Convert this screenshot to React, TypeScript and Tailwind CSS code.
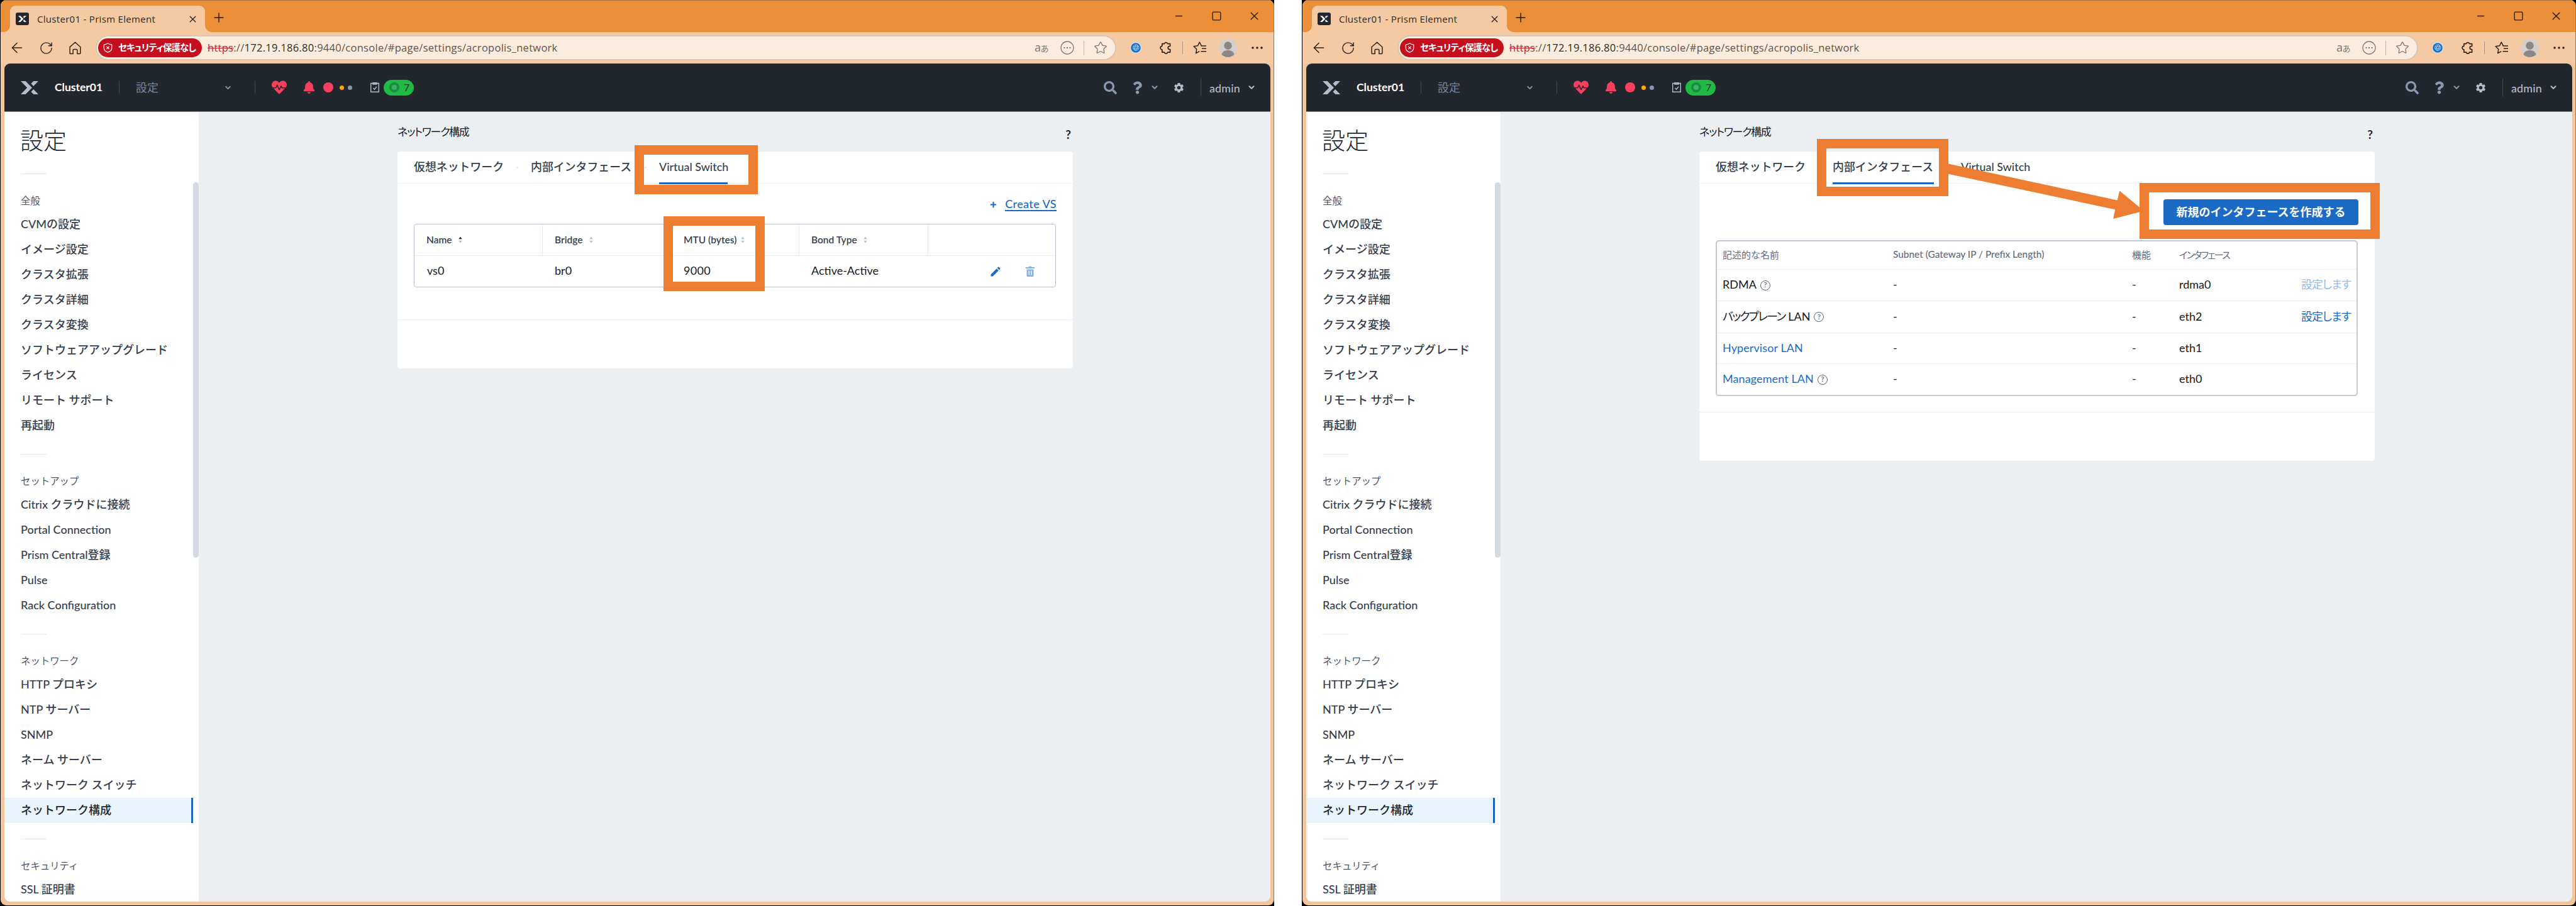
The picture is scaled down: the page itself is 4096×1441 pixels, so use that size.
import type { ReactNode } from "react";
import { RotateCw, ArrowLeft, X, Plus, Minus, Square, Star, ChevronDown } from "lucide-react";
import { FaHeartbeat, FaBell, FaSearch, FaQuestion, FaPlus } from "react-icons/fa";
import { MdSettings, MdEdit } from "react-icons/md";

const sections = [
  {
    title: "全般",
    items: [
      "CVMの設定",
      "イメージ設定",
      "クラスタ拡張",
      "クラスタ詳細",
      "クラスタ変換",
      "ソフトウェアアップグレード",
      "ライセンス",
      "リモート サポート",
      "再起動",
    ],
  },
  {
    title: "セットアップ",
    items: ["Citrix クラウドに接続", "Portal Connection", "Prism Central登録", "Pulse", "Rack Configuration"],
  },
  {
    title: "ネットワーク",
    items: ["HTTP プロキシ", "NTP サーバー", "SNMP", "ネーム サーバー", "ネットワーク スイッチ", "ネットワーク構成"],
  },
  { title: "セキュリティ", items: ["SSL 証明書"] },
];

const interfaces = [
  { name: "RDMA", help: true, link: false, iface: "rdma0", action: "disabled", height: "h-[50px]" },
  { name: "バックプレーン LAN", help: true, link: false, iface: "eth2", action: "enabled", height: "h-[51px]" },
  { name: "Hypervisor LAN", help: false, link: true, iface: "eth1", action: "", height: "h-[49px]" },
  { name: "Management LAN", help: true, link: true, iface: "eth0", action: "", height: "h-[50px]" },
];

function XLogo({ className }: { className?: string }) {
  return (
    <svg viewBox="0 0 28 21" className={className} fill="currentColor">
      <path d="M0 0H7.6L18 10.5L7.6 21H0L10.2 10.5Z" />
      <path d="M20.4 0H28L20.2 7.9L16.4 4.1Z" />
      <path d="M20.2 13.1L28 21H20.4L16.4 16.9Z" />
    </svg>
  );
}

function TitleBar() {
  return (
    <div className="flex h-[51px] shrink-0 items-start border-t border-[#a8703e] bg-[#eb9039]">
      <div className="relative mt-2 ml-[15px] flex h-[42px] w-[310px] items-center rounded-t-[9px] bg-[#f5caa2] pl-[9px]">
        <span className="absolute bottom-0 -left-[10px] size-[10px] bg-[radial-gradient(circle_at_0_0,transparent_9.5px,#f5caa2_10px)]" />
        <span className="absolute -right-[10px] bottom-0 size-[10px] bg-[radial-gradient(circle_at_100%_0,transparent_9.5px,#f5caa2_10px)]" />
        <span className="flex h-5 w-[21px] items-center justify-center rounded-[3px] bg-[#22272e] text-white">
          <XLogo className="h-2.5 w-[13px]" />
        </span>
        <span className="ml-[13px] w-[225px] text-[15px] leading-5 tracking-[0.3px] whitespace-nowrap text-[#2c2824]">Cluster01 - Prism Element</span>
        <X className="ml-[14px] size-[17px] text-[#1f1a16]" strokeWidth={1.8} />
      </div>
      <Plus className="mt-[15px] ml-[10px] size-6 text-[#1f1a16]" strokeWidth={1.4} />
      <div className="mt-[16px] mr-[22px] ml-auto flex gap-[43px] text-[#1f1a16]">
        <Minus className="size-[17px]" strokeWidth={1.8} />
        <Square className="size-[17px]" strokeWidth={1.8} />
        <X className="size-[17px] scale-125" strokeWidth={1.5} />
      </div>
    </div>
  );
}

function Toolbar() {
  return (
    <div className="flex h-[50px] shrink-0 items-center bg-[#f5caa2] text-[#2a211a]">
      <ArrowLeft className="ml-[13px] size-[26px]" strokeWidth={1.4} />
      <RotateCw className="ml-[22px] size-[23px]" strokeWidth={1.5} />
      <svg viewBox="0 0 20 20" className="ml-[24px] size-[21px]" fill="none" stroke="currentColor" strokeWidth="1.4" strokeLinejoin="round">
        <path d="M2 8.4L10 1.2L18 8.4V17.6A1 1 0 0 1 17 18.6H13.2V13A1.2 1.2 0 0 0 12 11.8H8A1.2 1.2 0 0 0 6.8 13V18.6H3A1 1 0 0 1 2 17.6Z" />
      </svg>
      <div className="ml-[22px] flex h-[40px] w-[1623px] items-center rounded-full border-2 border-[#dcc6b2] bg-[#fcecdd] pl-[2px] whitespace-nowrap">
        <div className="flex h-[30px] w-[165px] shrink-0 items-center rounded-full bg-[#c50f1f] pl-[8px] text-white">
          <svg viewBox="0 0 16 18" className="h-[16px] w-[15px] shrink-0" fill="none" stroke="currentColor" strokeWidth="1.4" strokeLinejoin="round">
            <path d="M8 1C9.8 2.6 12 3.2 15 3.4V9C15 12.8 12 15.8 8 17C4 15.8 1 12.8 1 9V3.4C4 3.2 6.2 2.6 8 1Z" />
            <path d="M5.6 6.6L10.4 11.4M10.4 6.6L5.6 11.4" />
          </svg>
          <span className="ml-[9px] text-[14.5px] leading-5 font-bold tracking-[-0.9px] [font-feature-settings:'palt']">セキュリティ保護なし</span>
        </div>
        <span className="ml-[9px] text-[16.5px] leading-5 tracking-[0.28px] text-[#5c544c]">
          <span className="text-[#c8202e] line-through decoration-1">https</span>
          ://<span className="text-[#2f2a26]">172.19.186.80</span>:9440/console/#page/settings/acropolis_network
        </span>
        <div className="ml-auto flex items-center text-[#7f756c]">
          <span className="w-[24px] text-[18px] leading-5 tracking-[-0.5px]">
            a<span className="text-[13px]">あ</span>
          </span>
          <svg viewBox="0 0 22 22" className="ml-[17px] size-[22px]" fill="none" stroke="currentColor" strokeWidth="1.3">
            <circle cx="11" cy="11" r="10" />
            <path d="M5.5 11h2M10 11h2M14.5 11h2" strokeWidth="2" />
          </svg>
          <span className="ml-[15px] h-[23px] w-px bg-[#c8b8a8]" />
          <Star className="mr-[12px] ml-[15px] size-[22px]" strokeWidth={1.4} />
        </div>
      </div>
      <svg viewBox="0 0 18 18" className="ml-[22px] size-[18px]">
        <circle cx="9" cy="9" r="9" fill="#dbe8f2" />
        <circle cx="9" cy="9" r="7.8" fill="#1a6fc4" />
        <g fill="none" stroke="#a9d0f2" strokeWidth="0.9">
          <circle cx="9.3" cy="8.7" r="4.6" />
          <ellipse cx="9.3" cy="8.7" rx="2" ry="4.6" transform="rotate(20 9.3 8.7)" />
          <path d="M5 7.2L13.2 7.6M5 10.2L13 10.6" />
        </g>
      </svg>
      <svg viewBox="0 0 20 20" className="ml-[28px] size-[22px]" fill="none" stroke="currentColor" strokeWidth="1.5" strokeLinejoin="round">
        <path d="M5 4.2H7.6A2.5 2.5 0 0 1 12.4 4.2H16V7.7H15.2A2.3 2.3 0 0 0 15.2 12.3H16V16.5H12.4A2.5 2.5 0 0 1 7.6 16.5H4.4V12.6A2.5 2.5 0 0 1 4.4 7.6V4.2Z" />
      </svg>
      <span className="ml-[15px] h-5 w-px bg-[#ad9078]" />
      <svg viewBox="0 0 22 20" className="ml-[16px] h-[20px] w-[22px]" fill="none" stroke="currentColor" strokeWidth="1.5" strokeLinejoin="round">
        <path d="M13.4 6.8L10.3 1L7.5 6.8L1.2 7.8L5.7 12.3L4.7 18.7L10.3 15.7" />
        <path d="M12.5 6.9H21M14 11.3H21M12.5 15.7H21" />
      </svg>
      <svg viewBox="0 0 30 30" className="ml-[19px] size-[29px]">
        <circle cx="15" cy="15" r="15" fill="#d3cfcb" />
        <circle cx="15" cy="11" r="6.5" fill="#8b8784" />
        <path d="M4.5 25.5C6 20.5 10 18.5 15 18.5S24 20.5 25.5 25.5A15 15 0 0 1 4.5 25.5Z" fill="#8b8784" />
      </svg>
      <svg viewBox="0 0 18 4" className="ml-[23px] h-1 w-[18px]" fill="currentColor">
        <circle cx="2" cy="2" r="1.8" />
        <circle cx="9" cy="2" r="1.8" />
        <circle cx="16" cy="2" r="1.8" />
      </svg>
    </div>
  );
}

function Header() {
  return (
    <div className="flex h-[77px] shrink-0 items-center border-b border-[#7e858e] bg-[#22272e] text-[#b6bccb]">
      <XLogo className="ml-[26px] h-[21px] w-[28px]" />
      <span className="ml-[26px] w-[77px] text-[17.5px] leading-6 font-bold text-white">Cluster01</span>
      <span className="ml-[25px] h-[20px] w-px bg-[#414852]" />
      <span className="ml-[26px] w-[141px] text-[18px] leading-6 text-[#77849a]">設定</span>
      <ChevronDown className="-ml-[1px] size-[13px] text-[#8a96a8]" strokeWidth={3.5} />
      <span className="ml-[36px] h-[20px] w-px bg-[#414852]" />
      <FaHeartbeat className="ml-[26px] size-[24px] text-[#fa3f5e]" />
      <FaBell className="ml-[25px] h-[20px] w-[21px] text-[#fa3f5e]" />
      <span className="ml-[12px] size-[16px] rounded-full bg-[#fa3f5e]" />
      <span className="ml-[10px] size-[7px] rounded-full bg-[#ffa90a]" />
      <span className="ml-[6px] size-[7px] rounded-full bg-[#8b98aa]" />
      <svg viewBox="0 0 14 16" className="ml-[29px] h-[16px] w-[14px]" fill="none" stroke="currentColor" strokeWidth="1.4">
        <path d="M0.7 1.5H13.3V15.3H0.7Z" />
        <path d="M4 0.5H10V3H4ZM4.5 9L6.5 11.2L10 6.8" />
      </svg>
      <span className="ml-[7px] flex h-[25px] w-[48px] items-center rounded-full bg-[#20bb45] pl-[9px] text-[#22272e]">
        <span className="size-[16px] rounded-full border-[4px] border-[#178f3d] bg-[#3fb268]" />
        <span className="ml-[7px] text-[16px] leading-5">7</span>
      </span>
      <div className="ml-auto flex items-center text-[#8b98ad]">
        <FaSearch className="size-[21px]" />
        <FaQuestion className="ml-[25px] h-[21px] w-[15px]" />
        <ChevronDown className="ml-[13px] size-[14px]" strokeWidth={3.5} />
        <MdSettings className="ml-[22px] size-[19px] text-[#b6bccb]" />
        <span className="ml-[25px] h-[28px] w-px bg-[#414852]" />
        <span className="mt-[2px] ml-[13px] w-[49px] text-[17.8px] leading-6 font-medium tracking-[0.2px] text-[#b6bccb]">admin</span>
        <ChevronDown className="mr-[23px] ml-[11px] size-[14px] text-[#b6bccb]" strokeWidth={3.5} />
      </div>
    </div>
  );
}

function Sidebar() {
  return (
    <aside className="relative w-[309px] shrink-0 overflow-hidden bg-white">
      <h1 className="mt-[18px] mb-[25px] ml-[25px] h-[55px] text-[37px] leading-[55px] font-light text-[#22272e]">設定</h1>
      {sections.map((section) => (
        <div key={section.title} className="pb-[25px]">
          <div className="ml-[26px] h-px w-[41px] bg-[#e3e6ea]" />
          <h2 className="mt-[30px] mb-[6px] ml-[26px] h-6 text-[15.4px] leading-6 text-[#4c5564]">{section.title}</h2>
          {section.items.map((item) => (
            <div
              key={item}
              className={
                item === "ネットワーク構成"
                  ? "mr-[9px] flex h-10 items-center border-r-[3px] border-[#1a66c0] bg-[#e8f5fe] pb-[2px] pl-[26px] text-[18px] font-medium text-[#22272e]"
                  : "flex h-10 items-center pb-[2px] pl-[26px] text-[18px] font-medium text-[#363e4c]"
              }
            >
              {item}
            </div>
          ))}
        </div>
      ))}
      {/* scrollbar thumb */}
      <div className="absolute top-[112px] right-0 h-[597px] w-[9px] rounded-full bg-[#d5dae2]" />
    </aside>
  );
}

function Tabs({ active }: { active: number }) {
  const tabs = ["仮想ネットワーク", "内部インタフェース", "Virtual Switch"];
  const widths = ["w-[143px]", "w-[161px]", "w-[109px]"];
  return (
    <div className="flex h-[51px] shrink-0 border-b border-[#edeff2] pl-[26px] text-[17.9px] font-medium whitespace-nowrap text-[#363e4c]">
      {tabs.map((tab, i) => (
        <div key={tab} className="flex">
          {i > 0 && <span className="mt-[24px] mr-[20px] ml-[20px] size-[3px] rounded-full bg-[#e3e6ea]" />}
          <span className={`${widths[i]} h-[52px] leading-[48px] ${i === active ? "border-b-[3px] border-[#1a66c0]" : ""}`}>{tab}</span>
        </div>
      ))}
    </div>
  );
}

function SortIcon({ active }: { active?: boolean }) {
  return (
    <svg viewBox="0 0 6 12" className="h-[11px] w-[6px]">
      <path d="M3 0.5L6 4.5H0Z" fill={active ? "#22272e" : "#b9bfc9"} />
      <path d="M3 11.5L6 7.5H0Z" fill="#b9bfc9" />
    </svg>
  );
}

function SwitchPanel() {
  const head = "flex items-center border-r border-[#e8ebef] pl-[19px]";
  return (
    <>
      <div className="mt-[19px] mr-[26px] flex h-[28px] items-center justify-end text-[#1b6bc6]">
        <FaPlus className="mr-[13px] size-[11px]" />
        <span className="border-b-2 border-[#1b6bc6] text-[18px] leading-[19px] font-medium tracking-[0.4px]">Create VS</span>
      </div>
      <div className="mt-[17px] ml-[26px] w-[1021px] rounded-[4px] border-[1.5px] border-[#b8bfca]">
        <div className="grid h-[50px] grid-cols-[204px_205px_203px_205px_1fr] border-b border-[#e8ebef] text-[15.5px] font-semibold text-[#363e4c]">
          <div className={head}>
            <span className="w-[51px]">Name</span>
            <SortIcon active />
          </div>
          <div className={head}>
            <span className="w-[55px]">Bridge</span>
            <SortIcon />
          </div>
          <div className={head}>
            <span className="w-[91px]">MTU (bytes)</span>
            <SortIcon />
          </div>
          <div className={head}>
            <span className="w-[83px]">Bond Type</span>
            <SortIcon />
          </div>
          <div />
        </div>
        <div className="grid h-[49px] grid-cols-[204px_205px_203px_205px_1fr] text-[18px] leading-[47px] text-[#15181d]">
          <span className="pl-5">vs0</span>
          <span className="pl-[19px]">br0</span>
          <span className="pl-[19px] tracking-[0.3px]">9000</span>
          <span className="pl-[19px]">Active-Active</span>
          <span className="flex items-center pl-[97px]">
            <MdEdit className="size-[20px] text-[#1b6bc6]" />
            <svg viewBox="0 0 14 17" className="ml-[38px] h-[17px] w-[14px]">
              <path d="M0 2H4.5L5.5 0.5H8.5L9.5 2H14V4H0Z" fill="#82b1e4" />
              <path d="M1.5 5.5H12.5V15.5A1.5 1.5 0 0 1 11 17H3A1.5 1.5 0 0 1 1.5 15.5ZM4.5 7.5V14.5H6V7.5ZM8 7.5V14.5H9.5V7.5Z" fill="#82b1e4" fillRule="evenodd" />
            </svg>
          </span>
        </div>
      </div>
      <div className="mt-[51px] border-t border-[#e8ebef]" />
    </>
  );
}

function InterfacePanel() {
  return (
    <>
      <button className="mt-[25px] mr-[26px] ml-auto flex h-[41px] w-[310px] items-center justify-center rounded-[4px] bg-[#1b6bc6] text-[18px] font-bold text-white">
        新規のインタフェースを作成する
      </button>
      <div className="mt-[24px] ml-[26px] w-[1021px] rounded-[5px] border-2 border-[#c3c8d2] text-[18px] whitespace-nowrap text-[#15181d]">
        <div className="grid h-[44px] grid-cols-[271px_380px_75px_1fr] items-center pb-[2px] pl-[9px] text-[15px] text-[#5f6b80]">
          <span>記述的な名前</span>
          <span className="text-[15.4px] font-medium">Subnet (Gateway IP / Prefix Length)</span>
          <span>機能</span>
          <span className="tracking-[-1.7px] [font-feature-settings:'palt']">インタフェース</span>
        </div>
        {interfaces.map((row) => (
          <div
            key={row.name}
            className={`${row.height} grid grid-cols-[271px_380px_75px_195px_1fr] items-center border-t border-[#edeff2] pb-[2px] pl-[9px]`}
          >
            <span className={`flex items-center ${row.link ? "tracking-[0.1px] text-[#1b6bc6]" : ""}`}>
              {row.name.startsWith("バック") ? (
                <>
                  <span className="tracking-[-1.9px] [font-feature-settings:'palt']">バックプレーン</span>
                  <span className="ml-[5px]">LAN</span>
                </>
              ) : (
                row.name
              )}
              {row.help && (
                <span className="mt-[2px] ml-[6px] flex size-[16px] items-center justify-center rounded-full border border-[#5a6373] text-[11px] font-semibold text-[#5a6373]">
                  ?
                </span>
              )}
            </span>
            <span>-</span>
            <span>-</span>
            <span>{row.iface}</span>
            {row.action && (
              <span
                className={`-ml-px tracking-[-1px] [font-feature-settings:'palt'] ${row.action === "enabled" ? "text-[#1b6bc6]" : "text-[#93bce8]"}`}
              >
                設定します
              </span>
            )}
          </div>
        ))}
      </div>
      <div className="mt-[25px] border-t border-[#e8ebef]" />
    </>
  );
}

function BrowserWindow({ active, height, children, notes }: { active: number; height: string; children: ReactNode; notes: ReactNode }) {
  return (
    <div className="relative h-[1441px] w-[2026px] overflow-hidden bg-black pb-px pl-px font-['Open_Sans','Noto_Sans_CJK_JP',sans-serif]">
      <div className="flex h-full flex-col overflow-hidden rounded-[9px] border-r border-[#8f7a68] bg-[#f2c59c]">
        <TitleBar />
        <Toolbar />
        <div className="mx-[5px] mb-[6px] ml-[6px] flex min-h-0 flex-1 flex-col overflow-hidden rounded-[9px] font-['Lato','Noto_Sans_CJK_JP',sans-serif]">
          <Header />
          <div className="flex min-h-0 flex-1 bg-[#ebeff2]">
            <Sidebar />
            <main className="ml-[316px] w-[1074px]">
              <div className="flex h-[63px] items-center justify-between">
                <span className="text-[17px] leading-6 tracking-[-1.3px] text-[#15181d] [font-feature-settings:'palt']">ネットワーク構成</span>
                <span className="mt-[8px] mr-[3px] text-[19px] leading-6 font-bold text-[#22272e]">?</span>
              </div>
              <div className={`${height} flex flex-col rounded-[4px] bg-white`}>
                <Tabs active={active} />
                {children}
              </div>
            </main>
          </div>
        </div>
      </div>
      {notes}
    </div>
  );
}

export default function App() {
  return (
    <div lang="ja" className="flex h-[1441px] w-[4096px] justify-between overflow-hidden bg-white">
      <BrowserWindow
        active={2}
        height="h-[345px]"
        notes={
          <>
            <div className="absolute top-[231px] left-[1009px] h-[78px] w-[196px] border-[15px] border-[#ed7d31]" />
            <div className="absolute top-[344px] left-[1055px] h-[119px] w-[161px] border-[15px] border-[#ed7d31]" />
          </>
        }
      >
        <SwitchPanel />
      </BrowserWindow>
      <BrowserWindow
        active={1}
        height="h-[492px]"
        notes={
          <>
            <div className="absolute top-[221px] left-[819px] h-[91px] w-[209px] border-[15px] border-[#ed7d31]" />
            <svg viewBox="0 0 320 90" className="absolute top-[260px] left-[1020px] h-[90px] w-[320px]" fill="#ed7d31">
              <path d="M7 0.2L276.6 58.6L280.3 43.6L319 75.5L270.2 87.9L273.2 73.2L7 16.5Z" />
            </svg>
            <div className="absolute top-[291px] left-[1332px] h-[89px] w-[382px] border-[15px] border-[#ed7d31]" />
          </>
        }
      >
        <InterfacePanel />
      </BrowserWindow>
    </div>
  );
}
